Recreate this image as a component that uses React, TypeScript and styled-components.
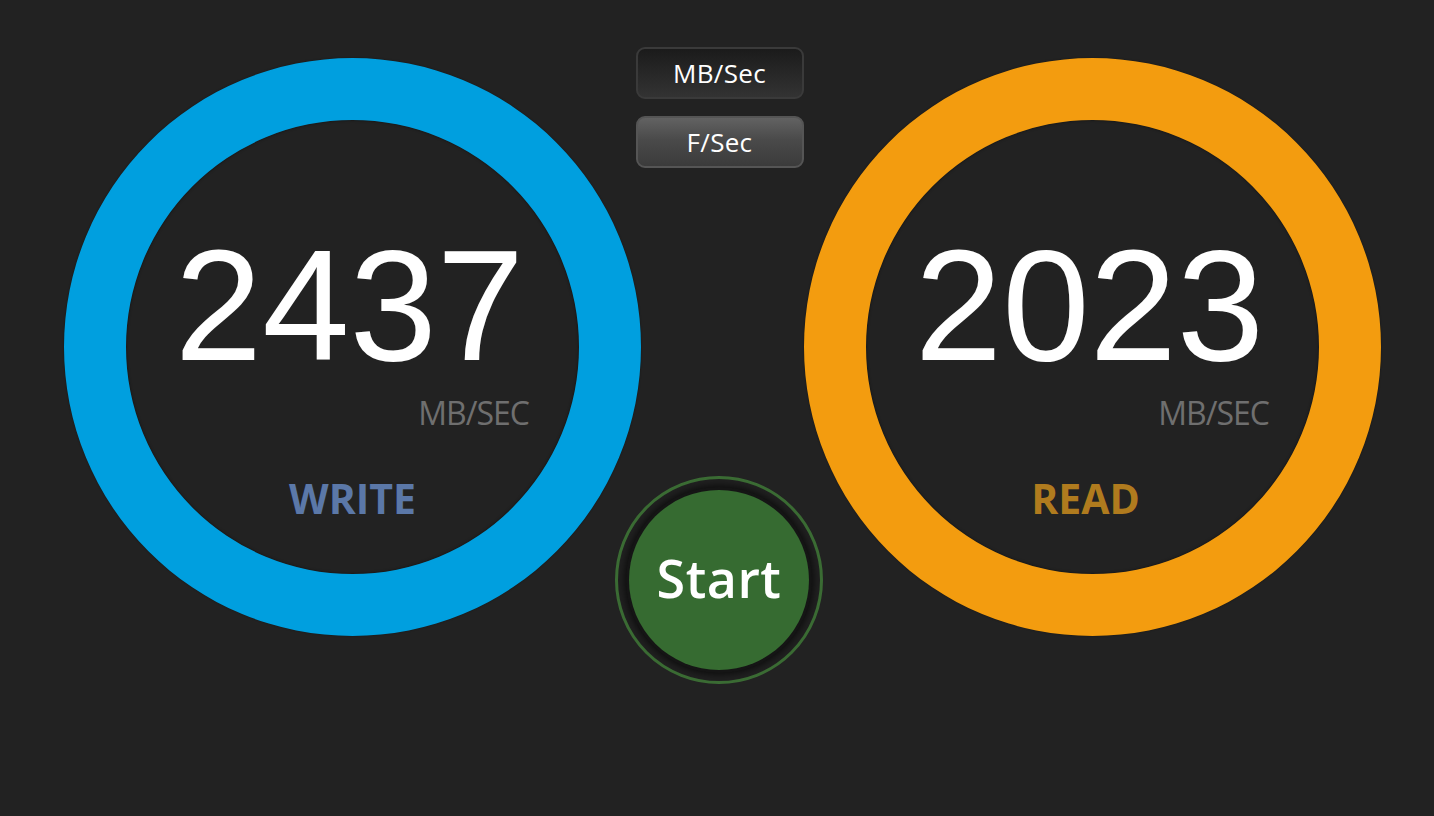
import React from 'react'
import styled, { createGlobalStyle } from 'styled-components'

const gauges = [
  { value: '2437', unit: 'MB/SEC', label: 'WRITE', ring: '#009fdf', tint: '#5b78a8', shift: 0 },
  { value: '2023', unit: 'MB/SEC', label: 'READ', ring: '#f39c0f', tint: '#b07b1e', shift: 14 },
]

const App = () => {
  const [mode, setMode] = React.useState('fps')
  const [write, read] = gauges

  return (
    <>
      <Global />
      <Page>
        <Row>
          <Gauge ring={write.ring}>
            <Value>{write.value}</Value>
            <Unit>{write.unit}</Unit>
            <Label tint={write.tint} shift={write.shift}>{write.label}</Label>
          </Gauge>

          <Middle>
            <Toggle active={mode === 'mbps'} onClick={() => setMode('mbps')}>MB/Sec</Toggle>
            <Toggle active={mode === 'fps'} onClick={() => setMode('fps')}>F/Sec</Toggle>
            <StartRing>
              <StartButton>Start</StartButton>
            </StartRing>
          </Middle>

          <Gauge ring={read.ring}>
            <Value>{read.value}</Value>
            <Unit>{read.unit}</Unit>
            <Label tint={read.tint} shift={read.shift}>{read.label}</Label>
          </Gauge>
        </Row>
      </Page>
    </>
  )
}

export default App

const Global = createGlobalStyle`
  html, body {
    margin: 0;
    padding: 0;
    background: #222222;
  }
`
const Page = styled.div`
  width: 100%;
  height: 100vh;
  background: #222222;
  overflow: hidden;
`
const Row = styled.div`
  display: flex;
  align-items: flex-start;
  padding: 47px 0 0 64px;
`
const Gauge = styled.div<{ ring: string }>`
  box-sizing: border-box;
  width: 577px;
  height: 578px;
  margin-top: 11px;
  flex-shrink: 0;
  border-radius: 50%;
  border: 62px solid ${p => p.ring};
  background: #222222;
  box-shadow: inset 0 0 3px rgba(0, 0, 0, 0.55), 0 0 2px rgba(0, 0, 0, 0.4);
  display: flex;
  flex-direction: column;
  align-items: center;
  padding-top: 107px;
`
const Value = styled.div`
  font-family: 'Liberation Sans', Arial, sans-serif;
  font-size: 157px;
  line-height: 1;
  color: #ffffff;
  margin-right: 6px;
`
const Unit = styled.div`
  align-self: flex-end;
  margin: 13px 50px 0 0;
  font-family: 'Open Sans', sans-serif;
  font-size: 32px;
  line-height: 1;
  letter-spacing: -1px;
  color: #6f6f6f;
`
const Label = styled.div<{ tint: string; shift: number }>`
  margin-top: 49px;
  margin-right: ${p => p.shift}px;
  font-family: 'Open Sans', sans-serif;
  font-weight: 700;
  font-size: 41px;
  line-height: 1;
  color: ${p => p.tint};
`
const Middle = styled.div`
  width: 169px;
  margin-left: -6px;
  flex-shrink: 0;
  display: flex;
  flex-direction: column;
  align-items: center;
  gap: 17px;
  position: relative;
  z-index: 1;
`
const Toggle = styled.button<{ active: boolean }>`
  box-sizing: border-box;
  width: 168px;
  height: 52px;
  border-radius: 9px;
  border: 2px solid ${p => (p.active ? '#555555' : '#3a3a3a')};
  background: ${p =>
    p.active
      ? 'linear-gradient(180deg, #626262 0%, #4a4a4a 45%, #3b3b3b 100%)'
      : 'linear-gradient(180deg, #1b1b1b 0%, #262626 45%, #333333 100%)'};
  color: #ffffff;
  font-family: 'Open Sans', sans-serif;
  font-weight: 500;
  font-size: 26px;
  letter-spacing: 0.3px;
  line-height: 1;
  padding: 0;
  cursor: pointer;
`
const StartRing = styled.div`
  box-sizing: border-box;
  width: 208px;
  height: 208px;
  margin-top: 291px;
  margin-left: -1px;
  border-radius: 50%;
  border: 3px solid #3b6c34;
  background: #202020;
  display: flex;
  align-items: center;
  justify-content: center;
`
const StartButton = styled.button`
  width: 180px;
  height: 180px;
  border-radius: 50%;
  border: none;
  background: #366b31;
  box-shadow: 0 0 0 3px #151515, 0 0 6px 5px rgba(0, 0, 0, 0.55);
  color: #ffffff;
  font-family: 'Open Sans', sans-serif;
  font-weight: 600;
  font-size: 52px;
  letter-spacing: 0.5px;
  line-height: 1;
  padding: 0 0 4px;
  cursor: pointer;
`
